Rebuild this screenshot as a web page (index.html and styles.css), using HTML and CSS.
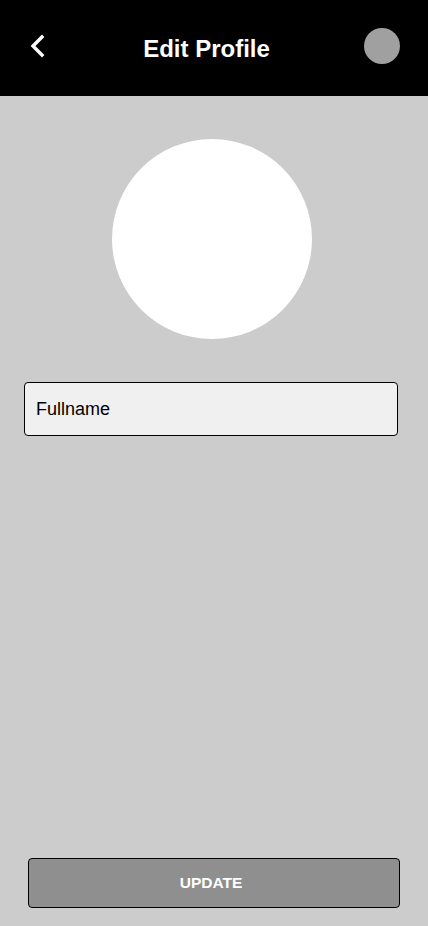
FILE: index.html
```html
<!DOCTYPE html>
<html>
<head>
<meta charset="utf-8">
<link rel="stylesheet" href="styles.css">
</head>
<body>
<div class="screen">
  <header class="topbar">
    <div class="back">
      <svg width="16" height="24" viewBox="0 0 16 24"><path d="M13 3 L4 12 L13 21" fill="none" stroke="#fff" stroke-width="3.4" stroke-linecap="square" stroke-linejoin="miter"/></svg>
    </div>
    <h1 class="title">Edit Profile</h1>
    <div class="dot"></div>
  </header>
  <main class="content">
    <div class="avatar"></div>
    <div class="field">Fullname</div>
    <button class="update">UPDATE</button>
  </main>
</div>
</body>
</html>
```
FILE: styles.css
```css
* { box-sizing: border-box; }
html, body { margin: 0; padding: 0; }
body { font-family: "Liberation Sans", Arial, sans-serif; background: #cccccc; }
.screen { width: 428px; height: 926px; display: flex; flex-direction: column; }
.topbar { height: 96px; background: #000; display: flex; align-items: center; padding: 0 28px 0 29px; }
.back { width: 16px; height: 24px; display: flex; margin-top: -4px; }
.title { flex: 1; margin: 2px 0 0 0; text-align: center; color: #fff; font-size: 24px; font-weight: bold; padding-left: 4px; }
.dot { width: 36px; height: 36px; border-radius: 50%; background: #a0a0a0; margin-top: -4px; }
.content { flex: 1; display: flex; flex-direction: column; padding: 43px 0 18px; }
.avatar { width: 200px; height: 200px; border-radius: 50%; background: #fff; align-self: flex-start; margin-left: 112px; }
.field { margin: 43px 30px 0 24px; height: 54px; border: 1px solid #000; border-radius: 4px; background: #f0f0f0; font-size: 18px; color: #000; padding-left: 11px; display: flex; align-items: center; }
.update { margin: auto 28px 0 28px; height: 50px; background: #8f8f8f; border: 1px solid #000; border-radius: 4px; color: #fff; font-family: "Liberation Sans", Arial, sans-serif; font-weight: bold; font-size: 15.5px; padding: 0 6px 0 0; }
```
